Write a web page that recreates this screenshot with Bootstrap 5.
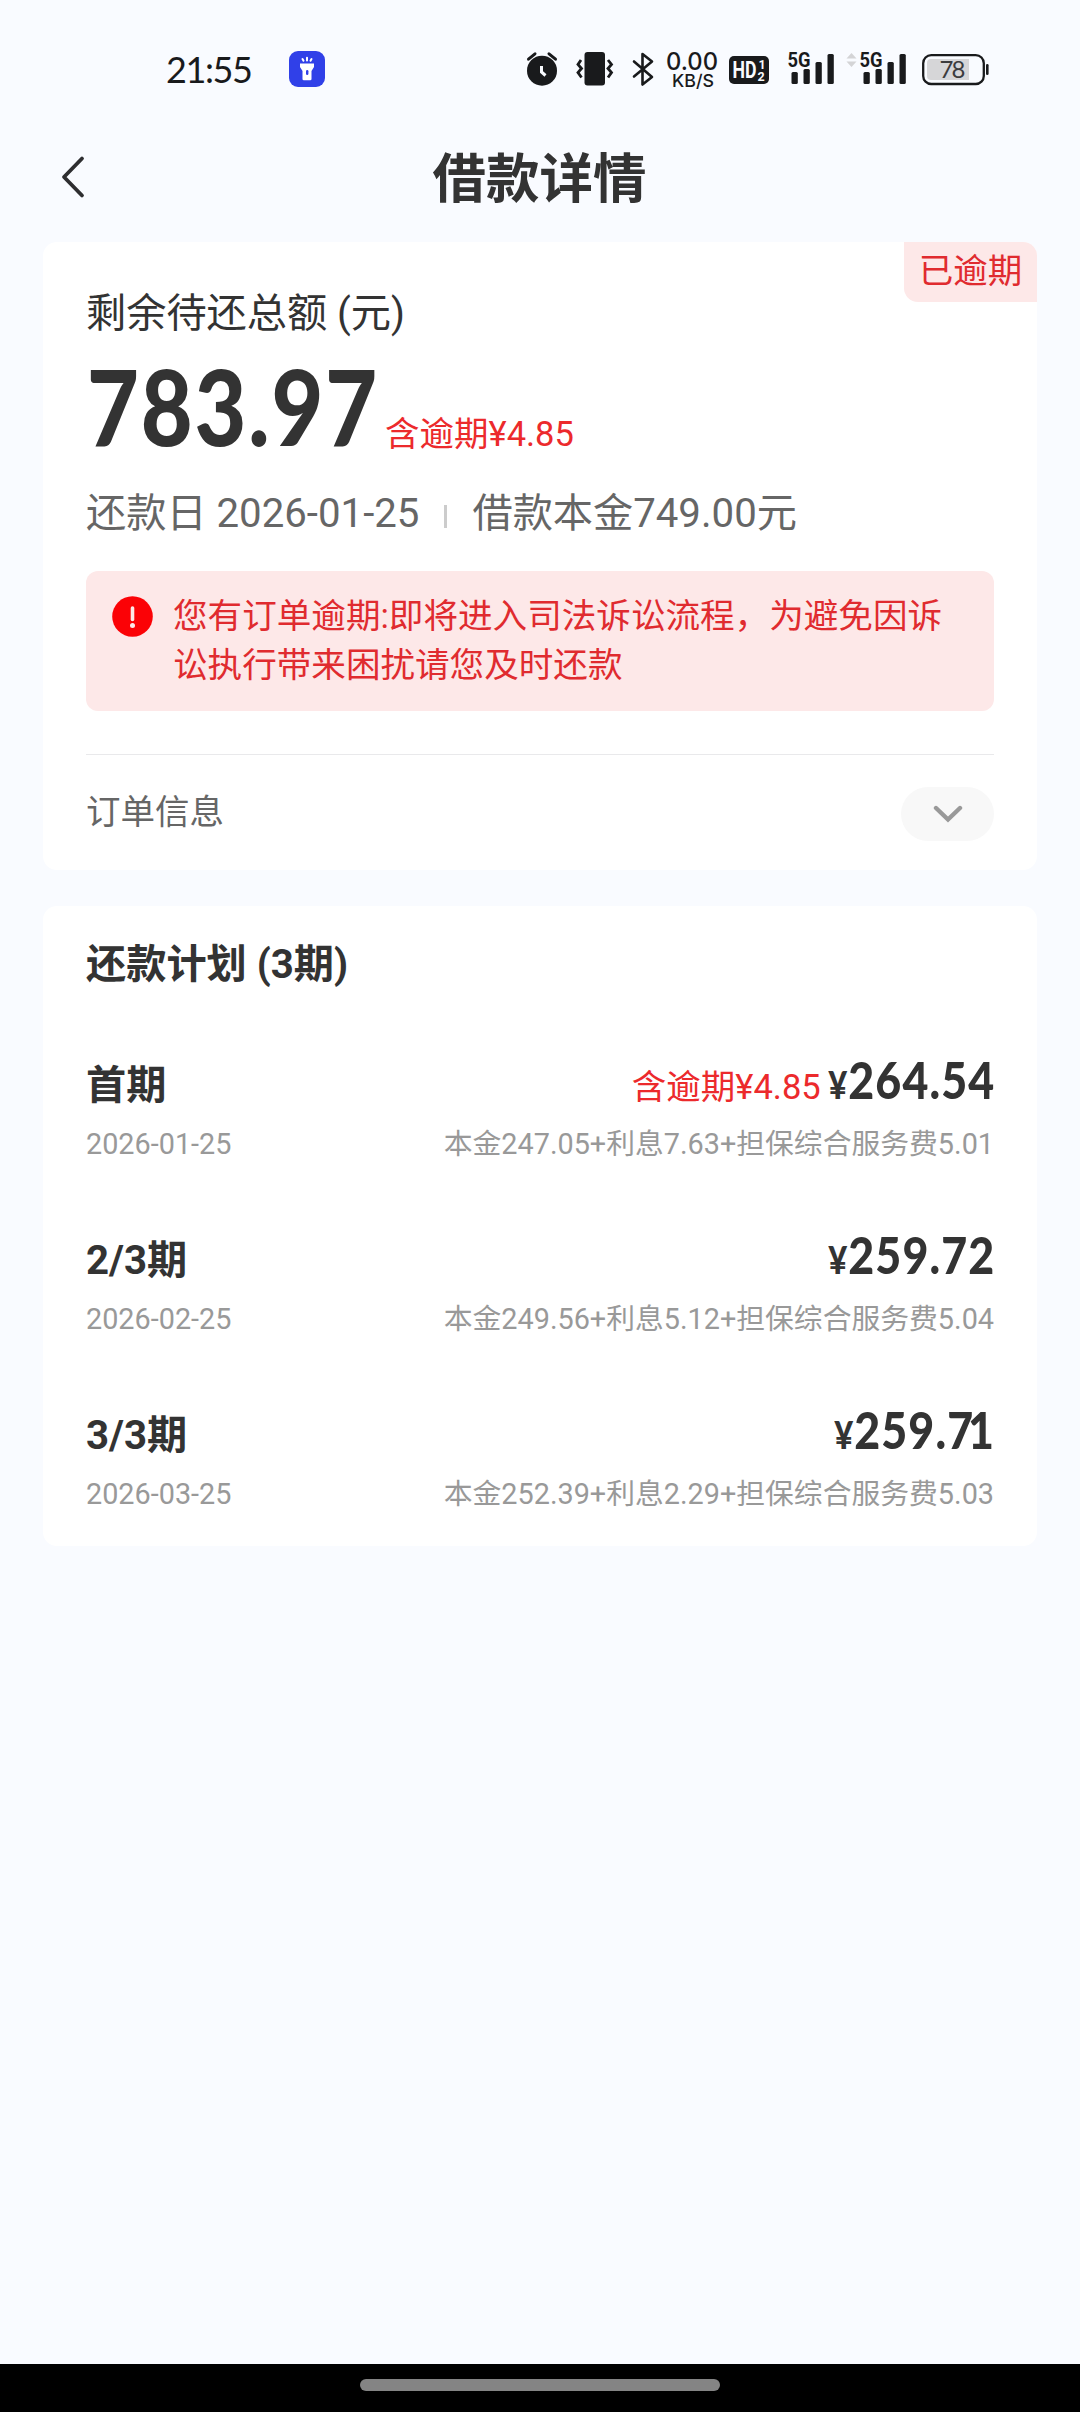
<!DOCTYPE html>
<html lang="zh-CN">
<head>
<meta charset="utf-8">
<meta name="viewport" content="width=device-width, initial-scale=1">
<title>借款详情</title>
<link href="https://cdn.jsdelivr.net/npm/bootstrap@5.3.0/dist/css/bootstrap.min.css" rel="stylesheet">
<style>
  body { background: #f9fbff; color: #333; font-family: Roboto, "Noto Sans CJK SC", sans-serif; min-height: 2412px; }
  .status-bar { height: 110px; padding: 48px 88px 0 166px; color: #191a1c; }
  .status-bar svg { display: block; }
  .clock { font: 400 36px/42px Lato, sans-serif; letter-spacing: -1.4px; width: 123px; }
  .torch { margin-top: 3px; }
  .title-bar { height: 132px; padding: 0 60px; }
  .title-bar h1 { font-size: 53.5px; line-height: 70px; padding-top: 7px; font-weight: 700; }
  .side { width: 28px; }
  .side-back { margin: 2px 0 0 -1px; }
  .panel { margin: 0 43px; padding: 0 43px; border: 0; border-radius: 14px; background: #fff; }
  .panel-sum { height: 628px; padding-top: 47px; }
  .panel-plan { height: 640px; padding-top: 34px; margin-top: 36px; }
  .state-tag { width: 133px; height: 60px; line-height: 59px; font-size: 34.5px; font-weight: 400; color: #e02b2f; background: #fde8e8; border-radius: 0 14px 0 14px; padding: 0; }
  .lbl { font-size: 40.2px; line-height: 50px; }
  .red { color: #ec2a2c; font-size: 34.5px; line-height: 40px; }
  .num { display: inline-block; font-family: Lato, sans-serif; font-weight: 900; transform-origin: 0 50%; white-space: nowrap; }
  .num-big { font-size: 104px; line-height: 100px; width: 297px; margin: 17px 1px 0 1px; transform: scaleX(.86); letter-spacing: 2.2px; }
  .info { margin-top: 33px; color: #666; }
  .sep { width: 3px; height: 23px; background: #ccc; margin: 4px 25px 0 25px; }
  .notice { margin-top: 32px; height: 140px; padding: 21px 40px 0 26px; background: #fde8e8; color: #e02b2f; border: 0; border-radius: 12px; font-size: 34.6px; line-height: 49px; }
  .notice svg { margin: 4px 20px 0 0; }
  .order { margin-top: 43px; border-top: 1px solid #e9e9eb; padding-top: 32px; color: #666; font-size: 34.5px; }
  .order-name { margin-top: -3px; }
  .fold { width: 93px; height: 54px; background: #f8f8f8; }
  .item { height: 175px; }
  .item-top { height: 60px; }
  .item-sub { margin-top: 15px; font-size: 28.8px; line-height: 40px; color: #999; }
  .plan-list { margin-top: 59px; }
  .num-mid { font-size: 52px; line-height: 60px; transform-origin: 100% 50%; transform: scaleX(.86); letter-spacing: 1.3px; margin-right: -1px; }
  .num-mid .yen { font-size: 38px; }
  .num-mid.over { margin-left: -20px; }
  .tail-one { letter-spacing: -6px; }
  .home-bar { height: 48px; background: #000; padding-top: 15px; }
  .home-bar div { width: 360px; height: 12px; background: #848484; }
</style>
</head>
<body class="d-flex flex-column">
<div class="status-bar d-flex">
  <div class="clock">21:55</div>
  <svg class="torch" width="36" height="36" viewBox="0 0 36 36"><rect width="36" height="36" rx="9" fill="#3040e8"/><g fill="#fff"><path d="M11 12.500h14v3.500l-2.500 4v8a1.300 1.300 0 0 1-1.300 1.300h-6.400A1.300 1.300 0 0 1 13.500 28v-8L11 16z"/><rect x="17" y="19" width="2.400" height="5" rx="1.200" fill="#3040e8"/></g><path d="M13.500 8l1 1.700M18 6.800v2.700M22.500 8l-1 1.700" stroke="#fff" stroke-width="2" stroke-linecap="round"/></svg>
  <div class="d-flex ms-auto">
    <svg width="48" height="44" viewBox="520 48 48 44"><circle cx="542" cy="70.700" r="15" fill="currentColor"/><path d="M528.500 59.200l6.500-5.400M555.500 59.200l-6.500-5.400" stroke="currentColor" stroke-width="3" stroke-linecap="round"/><path d="M541.500 66v6l4 3.500" stroke="#f9fbff" stroke-width="3" fill="none"/></svg>
    <svg width="54" height="44" viewBox="568 48 54 44"><rect x="584.500" y="52" width="20.500" height="33.500" rx="3" fill="currentColor"/><path d="M581 60l-3 4.500 3.500 4-3.500 4 3.500 5M608 60l3.500 4.500-3.500 4 3.500 4-3.500 5" fill="none" stroke="currentColor" stroke-width="2.800"/></svg>
    <svg width="40" height="44" viewBox="622 48 40 44"><path d="M634 61.500l18 15.500-9.500 7.500V54l9.500 7.500-18 15" fill="none" stroke="currentColor" stroke-width="2.600" stroke-linejoin="round" stroke-linecap="round"/></svg>
    <svg width="62" height="44" viewBox="662 48 62 44" fill="currentColor" font-family="Inter, sans-serif"><text x="666" y="70" font-size="24" font-weight="500" textLength="52" lengthAdjust="spacingAndGlyphs">0.00</text><text x="672" y="87" font-size="17.500" font-weight="500" textLength="42" lengthAdjust="spacingAndGlyphs">KB/S</text></svg>
    <svg width="54" height="44" viewBox="724 48 54 44"><rect x="729" y="56" width="40" height="28" rx="5" fill="currentColor"/><g fill="#f9fbff" font-family="Roboto, sans-serif" font-weight="700"><text x="732.500" y="78.300" font-size="23" textLength="24" lengthAdjust="spacingAndGlyphs">HD</text><text x="758.500" y="69" font-size="12.500">1</text><text x="757.500" y="81" font-size="12.500">2</text></g></svg>
    <svg width="64" height="44" viewBox="778 48 64 44" fill="currentColor"><text x="787.500" y="67" font-size="21" font-weight="700" font-family="Roboto, sans-serif" textLength="23" lengthAdjust="spacingAndGlyphs">5G</text><rect x="791.500" y="72" width="6.300" height="12" rx="1.500"/><rect x="803.500" y="69" width="6.300" height="15" rx="1.500"/><rect x="815.500" y="62" width="6.300" height="22" rx="1.500"/><rect x="827.500" y="54" width="6.300" height="30" rx="1.500"/></svg>
    <svg width="70" height="44" viewBox="842 48 70 44" fill="currentColor"><path d="M846.500 58.500l5-5.500 5 5.500zM846.500 61.500h10l-5 5.500z" fill="#d4d4d6"/><text x="859.500" y="67" font-size="21" font-weight="700" font-family="Roboto, sans-serif" textLength="23" lengthAdjust="spacingAndGlyphs">5G</text><rect x="863.500" y="72" width="6.300" height="12" rx="1.500"/><rect x="875.500" y="69" width="6.300" height="15" rx="1.500"/><rect x="887.500" y="62" width="6.300" height="22" rx="1.500"/><rect x="899.500" y="54" width="6.300" height="30" rx="1.500"/></svg>
    <svg width="80" height="44" viewBox="912 48 80 44"><rect x="923.200" y="55.200" width="60.600" height="28.800" rx="8" fill="none" stroke="currentColor" stroke-width="2.300"/><path d="M931 59h38v21h-38a4 4 0 0 1-4-4V63a4 4 0 0 1 4-4z" fill="#d6d6d8"/><rect x="986" y="64" width="2.600" height="11" rx="1.300" fill="currentColor"/><text x="939.500" y="78" font-size="24" font-family="Lato, sans-serif" fill="#3c3c3e" textLength="26">78</text></svg>
  </div>
</div>

<header class="title-bar d-flex justify-content-between align-items-center">
  <svg class="side side-back" width="28" height="44" viewBox="0 0 28 44"><path d="M23 3.500L5 22l18 18.500" fill="none" stroke="#2e2e30" stroke-width="3.800" stroke-linecap="round" stroke-linejoin="round"/></svg>
  <h1 class="m-0">借款详情</h1>
  <span class="side"></span>
</header>

<main class="flex-grow-1">
  <section class="card panel panel-sum">
    <span class="badge state-tag position-absolute top-0 end-0">已逾期</span>
    <div class="lbl">剩余待还总额 (元)</div>
    <div class="d-flex align-items-baseline"><span class="num num-big">783.97</span><span class="red">含逾期¥4.85</span></div>
    <div class="lbl info d-flex align-items-center"><span>还款日 2026-01-25</span><i class="sep"></i><span>借款本金749.00元</span></div>
    <div class="notice d-flex align-items-start">
      <svg class="flex-shrink-0" width="41" height="41" viewBox="0 0 41 41"><circle cx="20.500" cy="20.500" r="20.300" fill="#fb0206"/><path d="M20.500 12v11.500" stroke="#fde8e8" stroke-width="3.600" stroke-linecap="round"/><circle cx="20.500" cy="29.500" r="2.500" fill="#fde8e8"/></svg>
      <div>您有订单逾期:即将进入司法诉讼流程，为避免因诉讼执行带来困扰请您及时还款</div>
    </div>
    <div class="order d-flex justify-content-between align-items-center">
      <span class="order-name">订单信息</span>
      <span class="fold rounded-pill d-flex justify-content-center align-items-center"><svg width="30" height="18" viewBox="0 0 30 18"><path d="M3 3l12 11.500L27 3" fill="none" stroke="#999" stroke-width="4.400" stroke-linecap="round"/></svg></span>
    </div>
  </section>

  <section class="card panel panel-plan">
    <div class="lbl fw-bold">还款计划 (3期)</div>
    <div class="plan-list">
      <div class="item">
        <div class="item-top d-flex justify-content-between align-items-baseline"><span class="lbl fw-bold">首期</span><span><span class="red">含逾期¥4.85</span><span class="num num-mid over"><span class="yen">¥</span>264.54</span></span></div>
        <div class="item-sub d-flex justify-content-between"><span>2026-01-25</span><span>本金247.05+利息7.63+担保综合服务费5.01</span></div>
      </div>
      <div class="item">
        <div class="item-top d-flex justify-content-between align-items-baseline"><span class="lbl fw-bold">2/3期</span><span class="num num-mid"><span class="yen">¥</span>259.72</span></div>
        <div class="item-sub d-flex justify-content-between"><span>2026-02-25</span><span>本金249.56+利息5.12+担保综合服务费5.04</span></div>
      </div>
      <div class="item">
        <div class="item-top d-flex justify-content-between align-items-baseline"><span class="lbl fw-bold">3/3期</span><span class="num num-mid"><span class="yen">¥</span>259.<span class="tail-one">7</span>1</span></div>
        <div class="item-sub d-flex justify-content-between"><span>2026-03-25</span><span>本金252.39+利息2.29+担保综合服务费5.03</span></div>
      </div>
    </div>
  </section>
</main>

<footer class="home-bar d-flex justify-content-center"><div class="rounded-pill"></div></footer>
<script src="https://cdn.jsdelivr.net/npm/bootstrap@5.3.0/dist/js/bootstrap.bundle.min.js"></script>
</body>
</html>
